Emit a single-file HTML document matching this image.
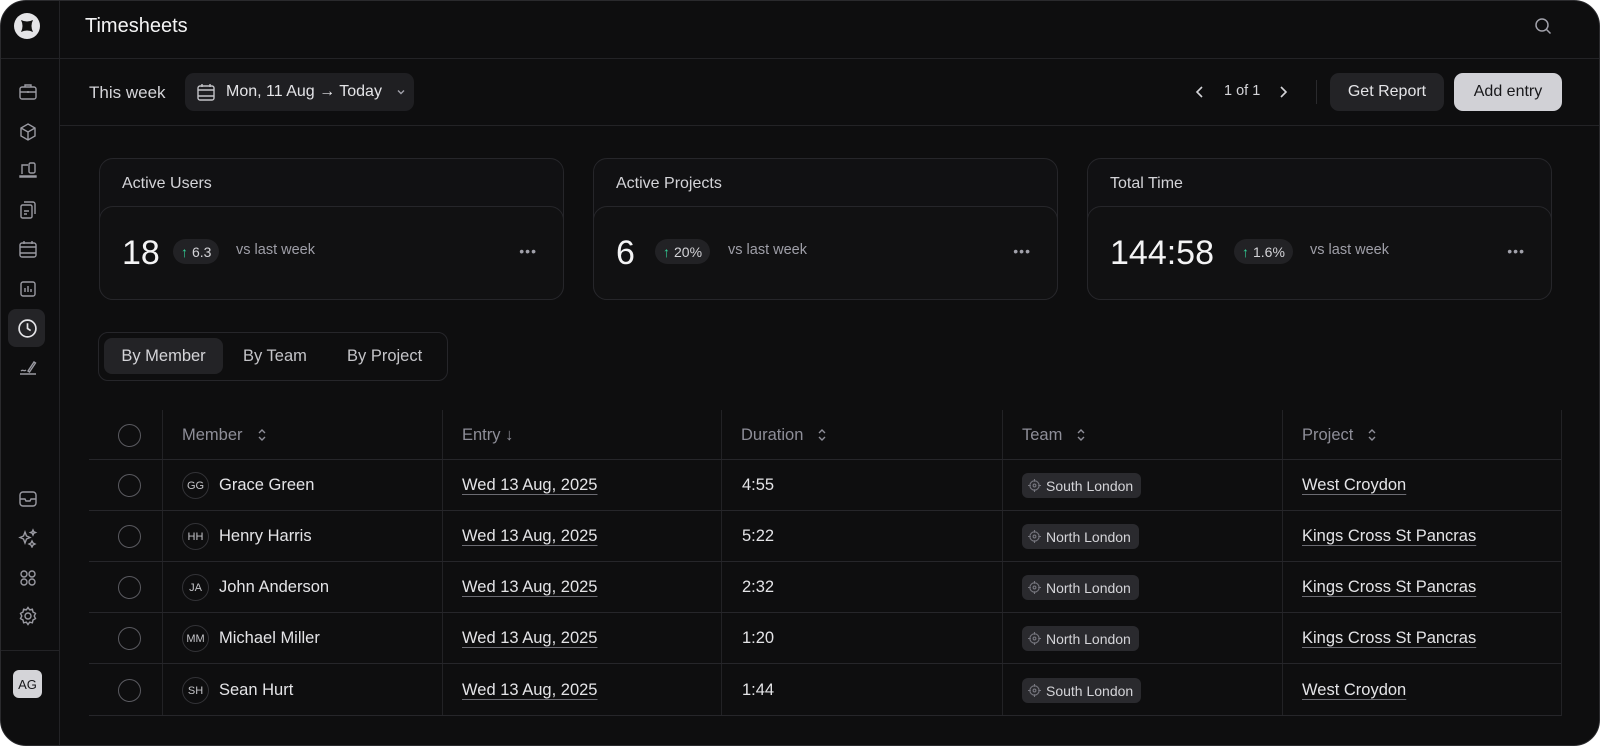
<!DOCTYPE html>
<html><head><meta charset="utf-8"><style>
*{box-sizing:border-box;margin:0;padding:0}
body{width:1600px;height:747px;background:#fff;font-family:"Liberation Sans",sans-serif;color:#e4e4e7;overflow:hidden;position:relative}
.win{position:absolute;left:0;top:0;width:1600px;height:746px;background:#0e0e0f;border-radius:26px;overflow:hidden;border:1px solid #2a2a2d}
.a{position:absolute}
.side{left:0;top:0;width:59px;height:746px;border-right:1px solid #232326}
svg{display:block}
.hl{height:1px;background:#232326}
.btn{position:absolute;border-radius:9px;font-size:16px;display:flex;align-items:center;justify-content:center}
.card{position:absolute;top:157px;width:465px;height:142px;border:1px solid #26262a;border-radius:14px;background:#111113}
.card .t{position:absolute;left:22px;top:16px;font-size:16px;color:#d4d4d8}
.card .in{position:absolute;left:-1px;right:-1px;top:47px;bottom:-1px;border:1px solid #26262a;border-radius:14px;background:#111112}
.val{position:absolute;left:22px;top:27px;font-size:34px;color:#f4f4f5}
.pill{position:absolute;top:32px;height:25px;border-radius:13px;background:#222225;font-size:14px;color:#d4d4d8;display:flex;align-items:center;padding:0 8px 0 8px}
.pill b{color:#34d399;font-weight:normal;margin-right:4px}
.vs{position:absolute;top:35px;font-size:14.5px;color:#9f9fa8}
.dots{position:absolute;right:26px;top:36px;font-size:14px;color:#a1a1aa;letter-spacing:1px}
.row{position:absolute;left:88px;width:1472px;height:51px;border-bottom:1px solid #26262a;font-size:16.5px;color:#e4e4e7}
.vl{position:absolute;top:409px;height:306px;width:1px;background:#222225}
.cell{position:absolute;top:0;height:51px;display:flex;align-items:center}
.chk{position:absolute;left:29px;top:14px;width:23px;height:23px;border:1.5px solid #5a5a60;border-radius:50%}
.av{width:27px;height:27px;border-radius:50%;border:1px solid #333337;font-size:11px;color:#c4c4c8;display:flex;align-items:center;justify-content:center;margin-right:10px}
.u{text-decoration:underline;text-decoration-color:#6b6b72;text-underline-offset:4px}
.team{height:25px;border-radius:6px;background:#2a2a2e;font-size:14px;color:#d4d4d8;display:flex;align-items:center;padding:0 8px 0 6px}
.team svg{margin-right:5px}
.th{color:#8e8e98;font-size:16.5px}
.sort{margin-left:14px}
</style></head><body>
<div class="win">
 <div class="a side"></div>
 <div class="a hl" style="left:0;top:57px;width:1600px"></div>
 <div class="a hl" style="left:59px;top:124px;width:1541px"></div>
 <div class="a hl" style="left:0;top:649px;width:59px"></div>
 <!-- logo -->
 <div class="a" style="left:13px;top:12px;width:26px;height:26px;border-radius:50%;background:#e4e4e7"></div>
 <svg class="a" style="left:18px;top:17px" width="16" height="16" viewBox="0 0 16 16"><path d="M2 2 Q8 5 14 2 Q11 8 14 14 Q8 11 2 14 Q5 8 2 2z" fill="#111"/></svg>
 <!-- sidebar icons -->
 <svg class="a" style="left:17px;top:81px" width="20" height="20" viewBox="0 0 20 20" fill="none" stroke="#9a9aa2" stroke-width="1.4"><rect x="2" y="5" width="16" height="12" rx="2"/><path d="M7 5V3h6v2M2 10h16M10 9v2"/></svg>
 <svg class="a" style="left:17px;top:121px" width="20" height="20" viewBox="0 0 20 20" fill="none" stroke="#9a9aa2" stroke-width="1.4"><path d="M10 2l7 4v8l-7 4-7-4V6z M3 6l7 4 7-4 M10 10v8"/></svg>
 <svg class="a" style="left:17px;top:159px" width="20" height="20" viewBox="0 0 20 20" fill="none" stroke="#9a9aa2" stroke-width="1.4"><path d="M4 14V5h6M2 16h16v1H2z"/><rect x="11" y="3" width="6" height="10" rx="1.5"/></svg>
 <svg class="a" style="left:17px;top:199px" width="20" height="20" viewBox="0 0 20 20" fill="none" stroke="#9a9aa2" stroke-width="1.4"><rect x="3" y="5" width="11" height="13" rx="1.5"/><path d="M6 2h9a2 2 0 0 1 2 2v10M6 11h5M6 14h3"/></svg>
 <svg class="a" style="left:17px;top:238px" width="20" height="20" viewBox="0 0 20 20" fill="none" stroke="#9a9aa2" stroke-width="1.4"><rect x="2" y="4" width="16" height="14" rx="2"/><path d="M2 8h16M2 14h16M6 2v3M14 2v3"/></svg>
 <svg class="a" style="left:17px;top:278px" width="20" height="20" viewBox="0 0 20 20" fill="none" stroke="#9a9aa2" stroke-width="1.4"><rect x="3" y="3" width="14" height="14" rx="2"/><path d="M7 13V9M10 13V7M13 13v-3"/></svg>
 <div class="a" style="left:7px;top:308px;width:37px;height:38px;border-radius:8px;background:#242427"></div>
 <svg class="a" style="left:16px;top:317px" width="21" height="21" viewBox="0 0 20 20" fill="none" stroke="#e4e4e7" stroke-width="1.6"><circle cx="10" cy="10" r="8"/><path d="M10 5v5l3 2"/></svg>
 <svg class="a" style="left:17px;top:356px" width="20" height="20" viewBox="0 0 20 20" fill="none" stroke="#9a9aa2" stroke-width="1.4"><path d="M2 17h16M3 14c2-2 3 1 5-1M10 14l6-9 1.5 1-6 9z"/></svg>
 <svg class="a" style="left:17px;top:488px" width="20" height="20" viewBox="0 0 20 20" fill="none" stroke="#9a9aa2" stroke-width="1.4"><rect x="2" y="3" width="16" height="14" rx="3"/><path d="M2 10h5l1 2h4l1-2h5"/></svg>
 <svg class="a" style="left:17px;top:527px" width="20" height="20" viewBox="0 0 20 20" fill="none" stroke="#9a9aa2" stroke-width="1.4"><path d="M7 4l1.5 4L12 9.5 8.5 11 7 15 5.5 11 2 9.5 5.5 8z M15 2l.8 1.8 1.7.7-1.7.7L15 7l-.8-1.8-1.7-.7 1.7-.7z M14 13l1 2 2 1-2 1-1 2-1-2-2-1 2-1z"/></svg>
 <svg class="a" style="left:17px;top:567px" width="20" height="20" viewBox="0 0 20 20" fill="none" stroke="#9a9aa2" stroke-width="1.4"><circle cx="6" cy="6" r="3"/><circle cx="14" cy="6" r="3"/><circle cx="6" cy="14" r="3"/><circle cx="14" cy="14" r="3"/></svg>
 <svg class="a" style="left:17px;top:605px" width="20" height="20" viewBox="0 0 20 20" fill="none" stroke="#9a9aa2" stroke-width="1.4"><circle cx="10" cy="10" r="3"/><path d="M10 1.5l1.6 2.3 2.8-.6.6 2.8 2.5 1.4-1.3 2.6 1.3 2.6-2.5 1.4-.6 2.8-2.8-.6L10 18.5l-1.6-2.3-2.8.6-.6-2.8-2.5-1.4L3.8 10 2.5 7.4 5 6l.6-2.8 2.8.6z"/></svg>
 <div class="a" style="left:12px;top:669px;width:29px;height:28px;border-radius:6px;background:#d4d4d8;color:#18181b;font-size:13px;display:flex;align-items:center;justify-content:center">AG</div>

 <!-- header -->
 <div class="a" style="left:84px;top:14px;font-size:20px;color:#f4f4f5">Timesheets</div>
 <svg class="a" style="left:1533px;top:16px" width="18" height="18" viewBox="0 0 18 18" fill="none" stroke="#a1a1aa" stroke-width="1.5"><circle cx="8" cy="8" r="6"/><path d="M12.5 12.5l4 4"/></svg>

 <!-- toolbar -->
 <div class="a" style="left:88px;top:82px;font-size:17px;color:#d4d4d8">This week</div>
 <div class="btn" style="left:184px;top:72px;width:229px;height:38px;background:#1f1f22;justify-content:flex-start;padding-left:11px;color:#e4e4e7">
  <svg width="20" height="20" viewBox="0 0 20 20" fill="none" stroke="#c4c4c8" stroke-width="1.4"><rect x="2" y="4" width="16" height="14" rx="2"/><path d="M2 8h16M2 14h16M6 2v3M14 2v3"/></svg>
  <span style="margin-left:10px">Mon, 11 Aug → Today</span>
  <svg style="margin-left:14px" width="10" height="10" viewBox="0 0 10 10" fill="none" stroke="#a1a1aa" stroke-width="1.4"><path d="M2 3.5l3 3 3-3"/></svg>
 </div>
 <svg class="a" style="left:1193px;top:83px" width="12" height="16" viewBox="0 0 12 16" fill="none" stroke="#d4d4d8" stroke-width="1.6"><path d="M8 3L3 8l5 5"/></svg>
 <div class="a" style="left:1223px;top:82px;font-size:14.5px;color:#d4d4d8">1 of 1</div>
 <svg class="a" style="left:1276px;top:83px" width="12" height="16" viewBox="0 0 12 16" fill="none" stroke="#d4d4d8" stroke-width="1.6"><path d="M4 3l5 5-5 5"/></svg>
 <div class="a" style="left:1315px;top:79px;width:1px;height:24px;background:#2a2a2d"></div>
 <div class="btn" style="left:1329px;top:72px;width:114px;height:38px;background:#232326;color:#e4e4e7">Get Report</div>
 <div class="btn" style="left:1453px;top:72px;width:108px;height:38px;background:#d1d1d6;color:#18181b">Add entry</div>

 <!-- cards -->
 <div class="card" style="left:98px"><div class="t">Active Users</div><div class="in">
  <div class="val">18</div><div class="pill" style="left:73px"><b>↑</b>6.3</div><div class="vs" style="left:136px">vs last week</div><div class="dots">•••</div></div></div>
 <div class="card" style="left:592px"><div class="t">Active Projects</div><div class="in">
  <div class="val">6</div><div class="pill" style="left:61px"><b>↑</b>20%</div><div class="vs" style="left:134px">vs last week</div><div class="dots">•••</div></div></div>
 <div class="card" style="left:1086px"><div class="t">Total Time</div><div class="in">
  <div class="val">144:58</div><div class="pill" style="left:146px"><b>↑</b>1.6%</div><div class="vs" style="left:222px">vs last week</div><div class="dots">•••</div></div></div>

 <!-- tabs -->
 <div class="a" style="left:97px;top:331px;width:350px;height:49px;border:1px solid #26262a;border-radius:10px"></div>
 <div class="btn" style="left:103px;top:337px;width:119px;height:36px;background:#232326;border-radius:8px;font-size:16.5px;color:#d4d4d8">By Member</div>
 <div class="a" style="left:242px;top:346px;font-size:16.5px;color:#c4c4c8">By Team</div>
 <div class="a" style="left:346px;top:346px;font-size:16.5px;color:#c4c4c8">By Project</div>

 <!-- table -->
 <div class="vl" style="left:161px"></div><div class="vl" style="left:441px"></div><div class="vl" style="left:720px"></div><div class="vl" style="left:1001px"></div><div class="vl" style="left:1281px"></div><div class="vl" style="left:1560px"></div>
 <div class="row" style="top:409px;height:50px">
  <div class="chk"></div>
  <div class="cell th" style="left:93px;height:50px">Member<svg class="sort" width="10" height="16" viewBox="0 0 10 16" fill="none" stroke="#8e8e98" stroke-width="1.4"><path d="M2 6l3-3 3 3M2 10l3 3 3-3"/></svg></div>
  <div class="cell th" style="left:373px;height:50px">Entry ↓</div>
  <div class="cell th" style="left:652px;height:50px">Duration<svg class="sort" width="10" height="16" viewBox="0 0 10 16" fill="none" stroke="#8e8e98" stroke-width="1.4"><path d="M2 6l3-3 3 3M2 10l3 3 3-3"/></svg></div>
  <div class="cell th" style="left:933px;height:50px">Team<svg class="sort" width="10" height="16" viewBox="0 0 10 16" fill="none" stroke="#8e8e98" stroke-width="1.4"><path d="M2 6l3-3 3 3M2 10l3 3 3-3"/></svg></div>
  <div class="cell th" style="left:1213px;height:50px">Project<svg class="sort" width="10" height="16" viewBox="0 0 10 16" fill="none" stroke="#8e8e98" stroke-width="1.4"><path d="M2 6l3-3 3 3M2 10l3 3 3-3"/></svg></div>
 </div>
 <div class="row" style="top:459px"><div class="chk"></div><div class="cell" style="left:93px"><div class="av">GG</div>Grace Green</div><div class="cell u" style="left:373px">Wed 13 Aug, 2025</div><div class="cell" style="left:653px">4:55</div><div class="cell" style="left:933px"><div class="team"><svg width="13" height="13" viewBox="0 0 14 14" fill="none" stroke="#77777f" stroke-width="1.2"><circle cx="7" cy="7" r="5"/><circle cx="7" cy="7" r="1.5"/><path d="M7 0v3M7 11v3M0 7h3M11 7h3"/></svg>South London</div></div><div class="cell u" style="left:1213px">West Croydon</div></div>
 <div class="row" style="top:510px"><div class="chk"></div><div class="cell" style="left:93px"><div class="av">HH</div>Henry Harris</div><div class="cell u" style="left:373px">Wed 13 Aug, 2025</div><div class="cell" style="left:653px">5:22</div><div class="cell" style="left:933px"><div class="team"><svg width="13" height="13" viewBox="0 0 14 14" fill="none" stroke="#77777f" stroke-width="1.2"><circle cx="7" cy="7" r="5"/><circle cx="7" cy="7" r="1.5"/><path d="M7 0v3M7 11v3M0 7h3M11 7h3"/></svg>North London</div></div><div class="cell u" style="left:1213px">Kings Cross St Pancras</div></div>
 <div class="row" style="top:561px"><div class="chk"></div><div class="cell" style="left:93px"><div class="av">JA</div>John Anderson</div><div class="cell u" style="left:373px">Wed 13 Aug, 2025</div><div class="cell" style="left:653px">2:32</div><div class="cell" style="left:933px"><div class="team"><svg width="13" height="13" viewBox="0 0 14 14" fill="none" stroke="#77777f" stroke-width="1.2"><circle cx="7" cy="7" r="5"/><circle cx="7" cy="7" r="1.5"/><path d="M7 0v3M7 11v3M0 7h3M11 7h3"/></svg>North London</div></div><div class="cell u" style="left:1213px">Kings Cross St Pancras</div></div>
 <div class="row" style="top:612px"><div class="chk"></div><div class="cell" style="left:93px"><div class="av">MM</div>Michael Miller</div><div class="cell u" style="left:373px">Wed 13 Aug, 2025</div><div class="cell" style="left:653px">1:20</div><div class="cell" style="left:933px"><div class="team"><svg width="13" height="13" viewBox="0 0 14 14" fill="none" stroke="#77777f" stroke-width="1.2"><circle cx="7" cy="7" r="5"/><circle cx="7" cy="7" r="1.5"/><path d="M7 0v3M7 11v3M0 7h3M11 7h3"/></svg>North London</div></div><div class="cell u" style="left:1213px">Kings Cross St Pancras</div></div>
 <div class="row" style="top:664px"><div class="chk"></div><div class="cell" style="left:93px"><div class="av">SH</div>Sean Hurt</div><div class="cell u" style="left:373px">Wed 13 Aug, 2025</div><div class="cell" style="left:653px">1:44</div><div class="cell" style="left:933px"><div class="team"><svg width="13" height="13" viewBox="0 0 14 14" fill="none" stroke="#77777f" stroke-width="1.2"><circle cx="7" cy="7" r="5"/><circle cx="7" cy="7" r="1.5"/><path d="M7 0v3M7 11v3M0 7h3M11 7h3"/></svg>South London</div></div><div class="cell u" style="left:1213px">West Croydon</div></div>
</div>
</body></html>
